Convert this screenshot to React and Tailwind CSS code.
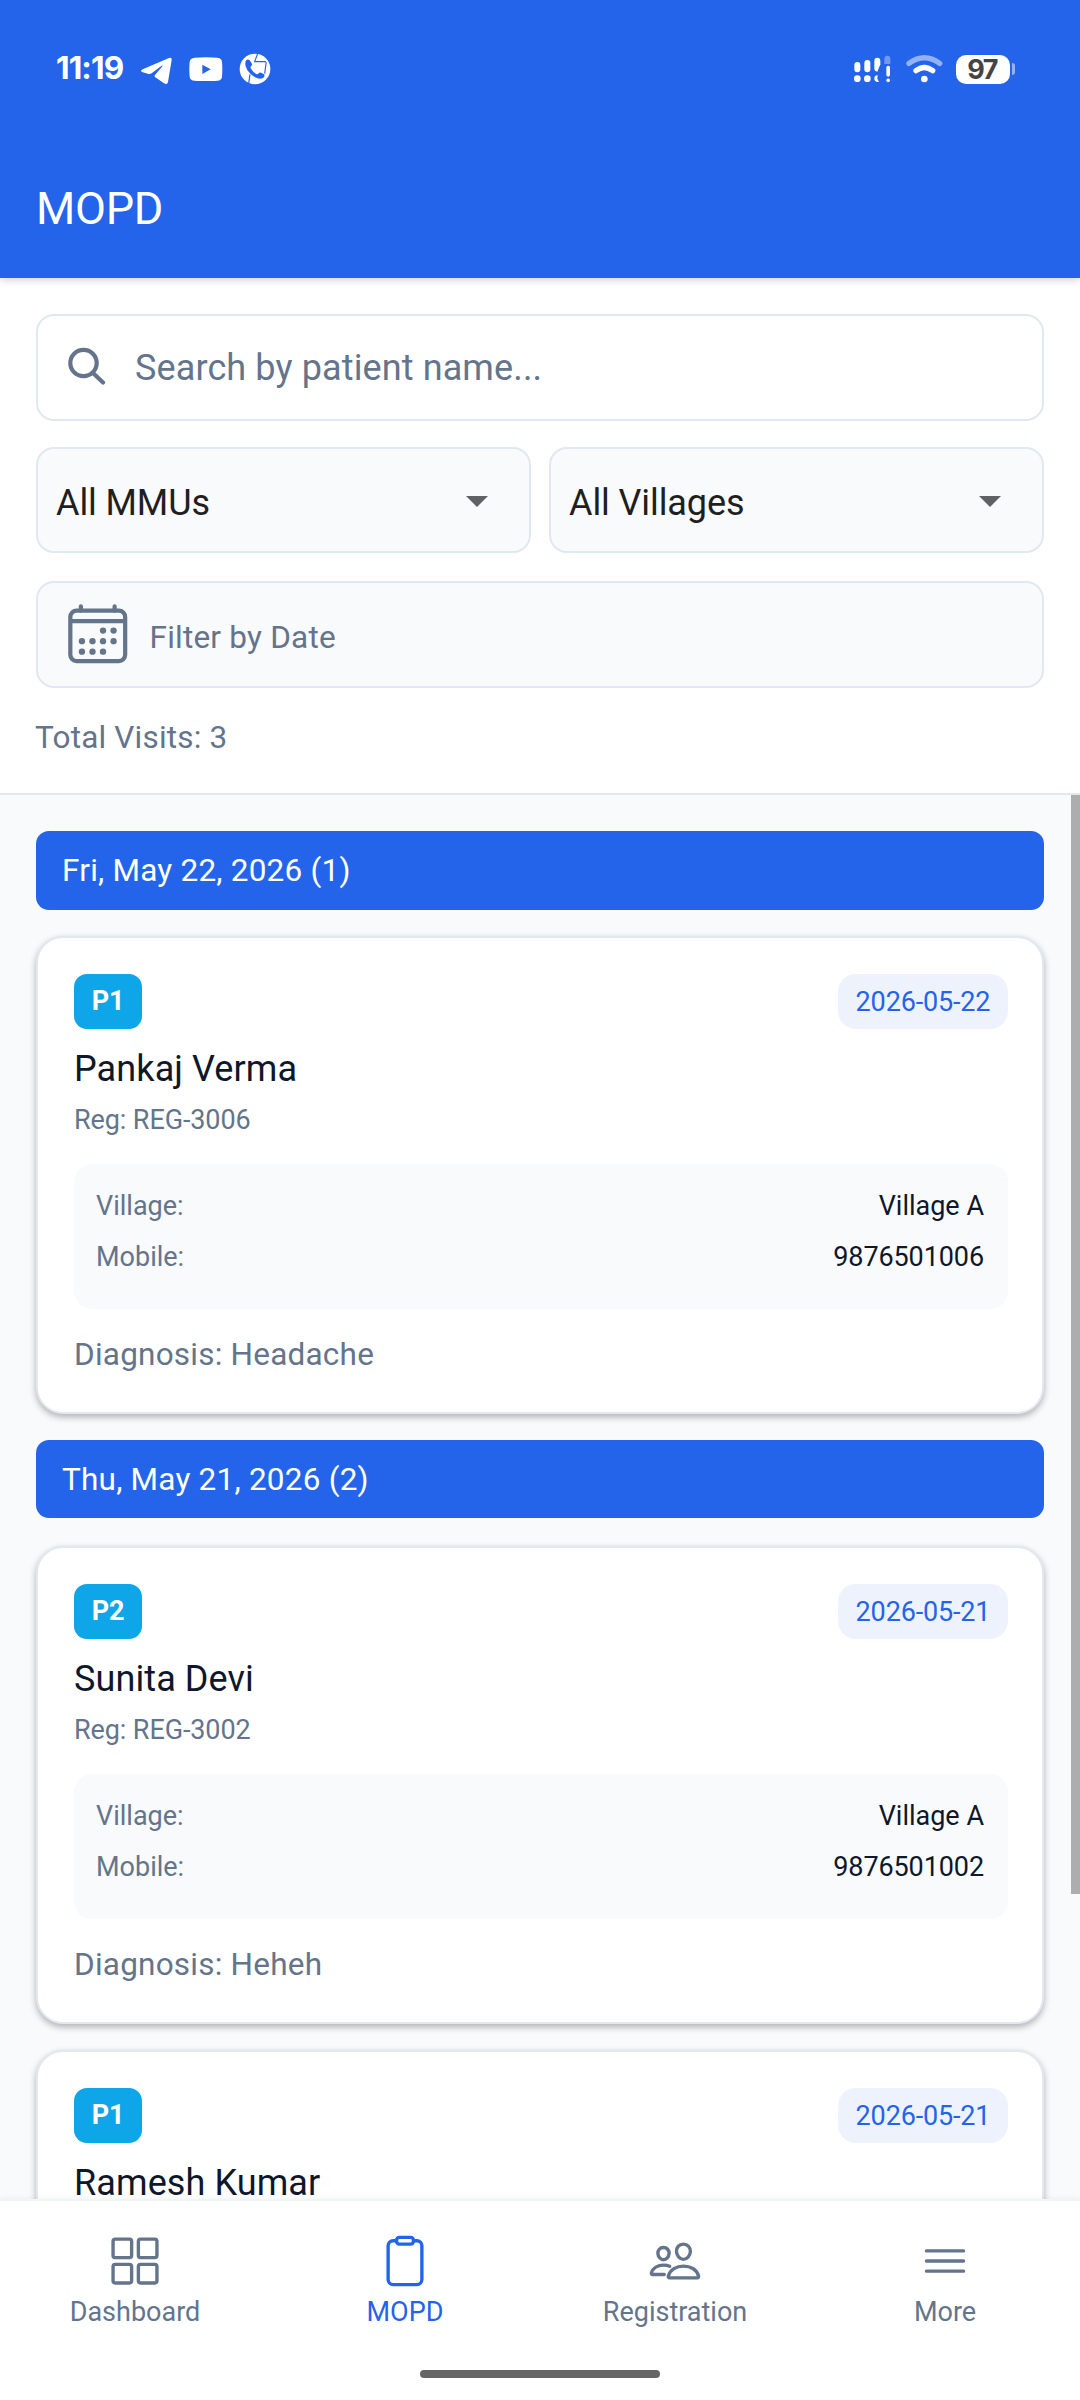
import { IoCalendarOutline, IoGridOutline, IoClipboardOutline, IoPeopleOutline, IoMenuOutline } from 'react-icons/io5';

const firstVisit = {
  tag: 'P1', date: '2026-05-22', name: 'Pankaj Verma', reg: 'REG-3006', village: 'Village A', mobile: '9876501006', diagnosis: 'Headache',
};

const olderVisits = [
  { tag: 'P2', date: '2026-05-21', name: 'Sunita Devi', reg: 'REG-3002', village: 'Village A', mobile: '9876501002', diagnosis: 'Heheh' },
  { tag: 'P1', date: '2026-05-21', name: 'Ramesh Kumar' },
];

const tabs = [
  { label: 'Dashboard', Icon: IoGridOutline },
  { label: 'MOPD', Icon: IoClipboardOutline, active: true },
  { label: 'Registration', Icon: IoPeopleOutline },
  { label: 'More', Icon: IoMenuOutline },
];

function StatusBar() {
  return (
    <div className="h-[138px] pl-[56px] pr-[65px] flex items-center justify-between">
      <div className="flex items-center">
        <span className="w-[85px] -mt-[2px] font-[Inter,sans-serif] text-[31.5px] leading-9 font-bold tracking-[-0.9px] whitespace-nowrap">11:19</span>
        {/* Telegram */}
        <svg className="w-8 h-7 mt-1" viewBox="423 79 96 84" fill="currentColor">
          <path d="M424 119 Q422 122 426 124 L446 130 Q451 131 455 128 L484 106 Q490 102 486 108 L465 133 Q462 137 466 140 L492 158 Q502 164 504 154 L515 88 Q516 79 507 82 L430 115 Q425 117 424 119 Z" />
        </svg>
        {/* YouTube */}
        <svg className="w-[34px] h-6 ml-4" viewBox="566 81 102 72" fill="currentColor">
          <path fillRule="evenodd" d="M583 83 Q617 80 651 83 Q664 84 665 96 Q667 118 665 140 Q664 151 651 152 Q617 155 583 152 Q569 151 568 140 Q566 118 568 96 Q569 84 583 83 Z M606 104 V132 L631 118 Z" />
        </svg>
        {/* Caller id */}
        <svg className="w-8 h-8 ml-4" viewBox="715 70 96 96" fill="none">
          <circle cx="763" cy="118" r="46" fill="white" />
          <path d="M771 72 L762 96 H794 Q797 97 796 103 L792 132" stroke="#2464eb" strokeWidth="3.5" />
          <path d="M748 134 L744 162" stroke="#2464eb" strokeWidth="3.5" />
          <path d="M737 91 Q742 87 747 92 L753 101 Q756 106 751 110 Q748 113 751 117 Q758 128 767 133 Q771 135 774 131 Q778 127 783 130 L790 134 Q794 139 788 144 Q778 151 762 142 Q742 131 735 110 Q732 97 737 91 Z" fill="#2464eb" />
        </svg>
      </div>
      <div className="flex items-center">
        {/* Mobile signal, two sims */}
        <svg className="w-[37px] h-7" viewBox="161 75 111 84" fill="currentColor">
          <rect x="162" y="96" width="18" height="31" rx="9" />
          <rect x="192" y="90" width="18" height="37" rx="9" />
          <path d="M222 93 Q222 83 231 83 Q240 83 240 93 V103 L231 125 Q222 125 222 115 Z" />
          <circle cx="171" cy="146" r="10" />
          <circle cx="201" cy="146" r="10" />
          <path d="M232 136 Q222 136 222 146 Q222 156 236 156 L231 146 Z" />
          <path d="M252 102 V87 Q252 77 261 77 Q270 77 270 87 V102 Z" opacity="0.35" />
          <rect x="258" y="107" width="11" height="33" rx="5.5" />
          <circle cx="263.5" cy="151" r="5.5" />
        </svg>
        <svg className="w-[37px] h-7 ml-[15px]" viewBox="317 74 111 84" fill="none" stroke="currentColor" strokeLinecap="round">
          <path d="M326 99 Q372 66 418 99" strokeWidth="16" opacity="0.5" />
          <path d="M347 121 Q372 102 397 121" strokeWidth="16" />
          <circle cx="372" cy="146" r="10" fill="currentColor" stroke="none" />
        </svg>
        <div className="ml-[13px] w-[54px] h-[29px] pr-[2px] rounded-[10px] bg-white text-[#444] font-[Inter,sans-serif] text-[27px] leading-[29px] font-bold tracking-[-1.5px] text-center">97</div>
        <div className="ml-[2px] w-[3px] h-3 rounded-r-[3px] bg-white/50" />
      </div>
    </div>
  );
}

function Dropdown({ label }) {
  return (
    <div className="flex-1 h-[106px] pl-[18px] pr-[41px] flex items-center justify-between rounded-[18px] border-2 border-[#e2e8f0] bg-[#f8fafc] text-[#1f1f1f] text-[36px] leading-[54px]">
      <span className="mt-[5px] tracking-[-0.1px]">{label}</span>
      <svg className="w-[22px] h-[11px] mt-[2px]" viewBox="0 0 22 11" fill="#606164">
        <path d="M0 0H22L11 11Z" />
      </svg>
    </div>
  );
}

function DateHeader({ children }) {
  return (
    <div className="h-full px-[26px] rounded-[13px] bg-[#2464eb] text-white text-[31.5px] leading-[80px] tracking-[0.22px]">{children}</div>
  );
}

function VisitCard({ visit }) {
  return (
    <div className="h-[478px] shrink-0 py-9 pl-9 pr-[34px] rounded-[27px] border-2 border-[#e2e8f0] bg-white shadow-[0_3px_7px_rgba(0,0,0,0.3)]">
      <div className="flex justify-between">
        <span className="w-[68px] h-[55px] rounded-[13px] bg-[#0ea5e9] text-white text-[27px] leading-[55px] font-bold tracking-[-0.2px] text-center">{visit.tag}</span>
        <span className="w-[170px] h-[55px] rounded-[18px] bg-[#edf2fd] text-[#2464eb] text-[27px] leading-[56px] tracking-[-0.15px] text-center">{visit.date}</span>
      </div>
      <h2 className="mt-[13px] text-[36px] leading-[54px] tracking-[0.1px] text-[#0f172a]">{visit.name}</h2>
      {visit.reg && (
        <>
          <p className="mt-[6px] text-[27px] leading-9 tracking-[-0.1px] text-[#64748b]">Reg: {visit.reg}</p>
          <div className="mt-[26px] h-[145px] pl-[22px] pr-6 pt-6 rounded-[18px] bg-[#f8fafc] text-[27px] leading-9">
            <div className="flex justify-between">
              <span className="text-[#64748b]">Village:</span>
              <span className="text-[#0f172a]">{visit.village}</span>
            </div>
            <div className="mt-[15px] flex justify-between">
              <span className="text-[#64748b]">Mobile:</span>
              <span className="text-[#0f172a] tracking-[-0.1px]">{visit.mobile}</span>
            </div>
          </div>
          <p className="mt-[23px] text-[31.5px] leading-[45px] tracking-[0.22px] text-[#64748b]">Diagnosis: {visit.diagnosis}</p>
        </>
      )}
    </div>
  );
}

export default function App() {
  return (
    <div className="w-[1080px] h-[2400px] flex flex-col overflow-hidden bg-white font-[Roboto,sans-serif]">
      <header className="relative z-10 h-[278px] shrink-0 bg-[#2464eb] text-white shadow-[0_2px_8px_rgba(0,0,0,0.18)]">
        <StatusBar />
        <h1 className="px-9 h-[140px] text-[45px] leading-[141px] tracking-[-0.3px]">MOPD</h1>
      </header>

      {/* Filters */}
      <section className="h-[517px] shrink-0 px-9 pt-9 border-b-2 border-[#e2e8f0] bg-white">
        <div className="h-[107px] pl-[30px] flex items-center rounded-[18px] border-2 border-[#e2e8f0]">
          <svg className="w-[38px] h-[38px] -mt-[3px]" viewBox="0 0 38 38" fill="none" stroke="#64748b" strokeWidth="4.2" strokeLinecap="round">
            <circle cx="15.5" cy="16" r="13.2" />
            <path d="M25 26L35 35.5" />
          </svg>
          <span className="ml-[29px] mt-[1px] text-[36px] leading-[54px] tracking-[0.12px] text-[#64748b]">Search by patient name...</span>
        </div>
        <div className="mt-[26px] flex gap-[18px]">
          <Dropdown label="All MMUs" />
          <Dropdown label="All Villages" />
        </div>
        <div className="mt-7 h-[107px] pl-[26px] flex items-center rounded-[18px] border-2 border-[#e2e8f0] bg-[#f8fafc]">
          <IoCalendarOutline className="w-[67.5px] h-[67.5px] -mt-[2px] text-[#64748b]" />
          <span className="ml-[18px] mt-[5px] text-[31.5px] leading-[45px] tracking-[0.22px] text-[#64748b]">Filter by Date</span>
        </div>
        <p className="-ml-px mt-[27px] text-[31.5px] leading-[45px] tracking-[0.2px] text-[#64748b]">Total Visits: 3</p>
      </section>

      {/* Visit list */}
      <main className="h-[1404px] shrink-0 flex justify-between overflow-hidden bg-[#f8fafc]">
        <div className="w-[1080px] px-9 pt-9 flex flex-col gap-[26px]">
          <div className="h-[79px] shrink-0">
            <DateHeader>Fri, May 22, 2026 (1)</DateHeader>
          </div>
          <VisitCard visit={firstVisit} />
          <div className="h-[78px] mb-[2px] shrink-0">
            <DateHeader>Thu, May 21, 2026 (2)</DateHeader>
          </div>
          {olderVisits.map((visit) => (
            <VisitCard key={visit.name} visit={visit} />
          ))}
        </div>
        <div className="-ml-[9px] w-[9px] h-[1099px] shrink-0 bg-[#acadaf]" />
      </main>

      <nav className="relative z-10 grow border-t-2 border-[#f1f5f9] bg-white shadow-[0_-1px_5px_rgba(0,0,0,0.05)]">
        <div className="pt-[33px] grid grid-cols-4">
          {tabs.map(({ label, Icon, active }) => (
            <div key={label} className={`flex flex-col items-center ${active ? 'text-[#2464eb]' : 'text-[#64748b]'}`}>
              <Icon className="w-[54px] h-[54px]" />
              <span className="mt-[6px] text-[27px] leading-9">{label}</span>
            </div>
          ))}
        </div>
        <div className="mx-auto mt-10 w-[240px] h-2 rounded-full bg-[#666]" />
      </nav>
    </div>
  );
}
